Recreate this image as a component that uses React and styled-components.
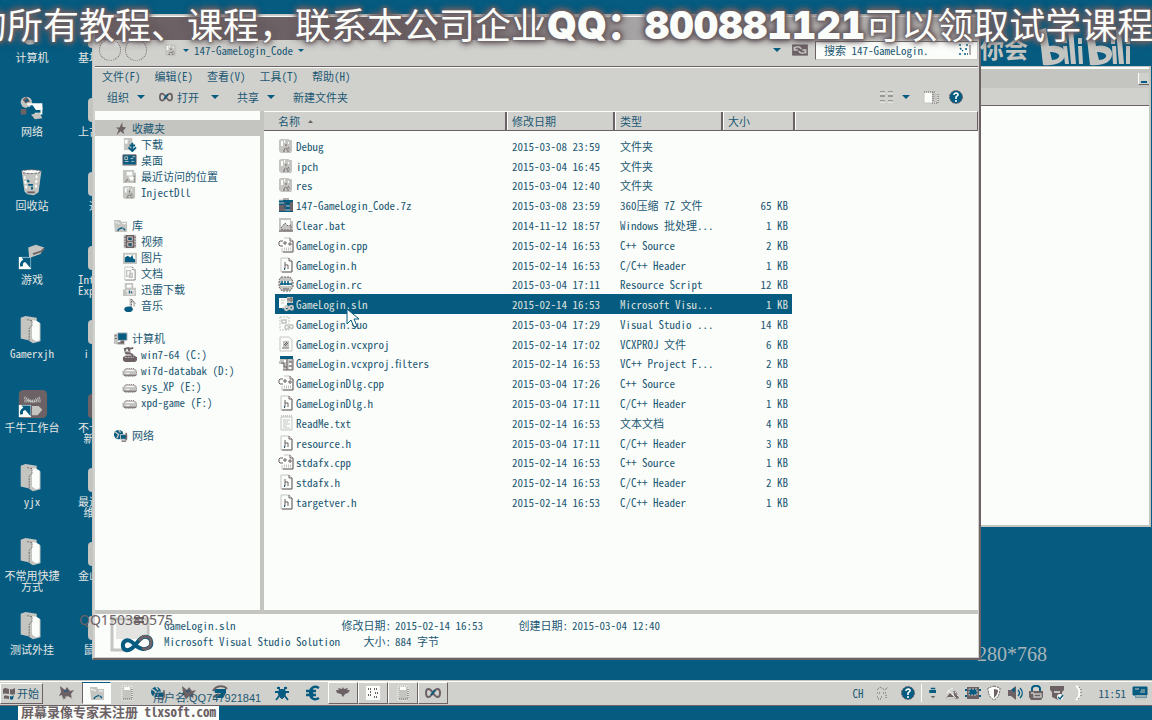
import React from "react";
import styled, { createGlobalStyle, css } from "styled-components";

const c = {
  blue: "#065b80",
  face: "#d0d1cd",
  gray: "#c4c5c1",
  white: "#fbfdfa",
  brown: "#6c6165",
  ink: "#1c5873",
};

const Global = createGlobalStyle`
  *, *::before, *::after { box-sizing: border-box; }
  html, body { margin: 0; }
  body {
    background: ${c.blue};
    color: ${c.ink};
    font-family: "Noto Sans CJK SC", "Liberation Sans", sans-serif;
    font-feature-settings: "hwid";
    font-size: 11px;
    line-height: 16px;
    overflow: hidden;
  }
  button, input {
    font: inherit;
    font-feature-settings: inherit;
    color: inherit;
    background: none;
    border: 0;
    padding: 0;
    margin: 0;
  }
  ul { list-style: none; margin: 0; padding: 0; }
  svg { display: block; flex: none; }
`;

/* ---------- icons ---------- */

const Svg = ({ s = 16, w, h, box = "0 0 16 16", children }) => (
  <svg width={w || s} height={h || s} viewBox={box} fill="none" aria-hidden="true">{children}</svg>
);

const art = {
  folder: <><path d="M1 2l2-1h8v1h3v11l-1 2H3l-2-2z" fill={c.gray} /><path d="M3 3h2v5H3zM6 2h1v3H6zM10 4h1v2h-1z" fill={c.white} /><path d="M5 13h2M6 12l2-3M8 6v3M10 9l2 3M9 13h3M8 11h2" stroke={c.brown} strokeDasharray="2 1" /></>,
  archive: <><path d="M1 3h14v12H1z" fill={c.blue} /><path d="M1 3h4M1 6h5M2 10h4M1 13h13M8 9h6" stroke={c.gray} /><path d="M1 8h5v6H1zM12 5h3v9h-3z" fill={c.brown} /><path d="M5 2h6M7 5v9" stroke={c.brown} /></>,
  bat: <><path d="M1 1h12v3h2v11H1z" fill={c.gray} /><path d="M3 3h9v9H3z" fill={c.white} /><path d="M3 11l4-5 3 3 3-1v5H4z" fill={c.gray} stroke={c.brown} strokeDasharray="2 1" /><path d="M1 14h14" stroke={c.brown} /></>,
  cpp: <><path d="M6 1h6l3 3v11H4v-4" fill={c.white} stroke={c.gray} /><path d="M15 4v11H5M12 1v3h3" stroke={c.brown} /><path d="M5 4H2L1 5v3l1 1h3M7 4v4M5 6h4M12 5v4M10 7h4" stroke={c.brown} /><path d="M6 12h7" stroke={c.gray} strokeDasharray="1 1" strokeWidth="3" /></>,
  header: <><path d="M3 1h8l3 3v11H3z" fill={c.white} stroke={c.gray} /><path d="M14 4v11H4M11 1v3h3" stroke={c.brown} /><path d="M7 5v7M7 8h3v4" stroke={c.brown} /><path d="M6 12h1" stroke={c.ink} strokeWidth="2" /></>,
  rc: <><path d="M3 1h9l3 4v6l-3 4H4L1 11V4z" fill={c.gray} stroke={c.brown} strokeDasharray="2 1" /><path d="M3 5h10v5H3z" fill={c.white} /><path d="M2 8h12M4 5v4M7 5v4M10 5v4" stroke={c.blue} strokeWidth="1.6" /><path d="M5 13h6" stroke={c.brown} /></>,
  sln: <><path d="M1 2h8v10H1z" fill={c.white} /><path d="M9 1h6v6H9z" fill={c.gray} /><path d="M10 2v3M12 2h2v3h-2z" stroke={c.brown} /><path d="M7 12c1-4 3-1 4 0s4 3 4 0-3-3-4 0-4 3-4 0" stroke={c.gray} strokeWidth="2" /><path d="M3 4h4M3 7h3M4 12h4" stroke={c.gray} /></>,
  suo: <><path d="M2 1h9v13H2z" fill={c.white} stroke={c.gray} strokeDasharray="2 1" /><path d="M7 11c1-4 3-1 4 0s4 3 4 0-3-3-4 0-4 3-4 0M4 4h4v3H4z" stroke={c.gray} strokeWidth="1.6" /></>,
  proj: <><path d="M2 1h9l3 3v11H2z" fill={c.white} stroke={c.gray} /><path d="M5 5h6v6H5z" fill={c.gray} /><path d="M6 9l3-3M7 10l3-3M4 12h7" stroke={c.brown} /></>,
  filters: <><path d="M2 1h13v3H2z" fill={c.blue} /><path d="M2 4h13v11H5V9H1V6h1z" fill={c.gray} /><path d="M9 4v11M3 8h3v4h3M11 7h3M11 11h3M5 15h10V4" stroke={c.brown} /><path d="M6 6h2M11 9h2M11 13h2" stroke={c.white} strokeWidth="2" /></>,
  txt: <><path d="M3 2h11v13H3z" fill={c.white} stroke={c.gray} /><path d="M3 1h11" stroke={c.gray} strokeWidth="2" strokeDasharray="1 1" /><path d="M5 5h7M5 7h5M5 9h7M5 11h4M5 13h7" stroke={c.gray} /></>,
  star: <><path d="M8 1l2 5h5l-4 3 1 6-4-3-5 3 2-6-4-3h5z" fill={c.gray} /><path d="M10 1v5l4 1-3 3 1 4-4-3-4 4 2-6-3-2h4z" fill={c.brown} /></>,
  download: <><path d="M2 1h9v13H2z" fill={c.gray} /><path d="M3 3h3v4H3z" fill={c.white} /><path d="M11 6v8M7 11l4 4 4-4M8 9h6" stroke={c.blue} strokeWidth="2" /></>,
  desktop: <><path d="M1 2h14v11H1z" fill={c.blue} stroke={c.brown} /><path d="M3 4h3v3H3zM11 4h3M9 6h3M3 9h4M10 9h3" stroke={c.gray} /><path d="M1 13h14" stroke={c.gray} /></>,
  recent: <><path d="M1 1h12v3h2v11H1z" fill={c.gray} /><path d="M5 3h6v4H5zM7 8h6v4H9z" fill={c.white} /><path d="M4 14l1-3 3 2M13 7v7" stroke={c.brown} strokeDasharray="2 1" /></>,
  library: <><path d="M1 2h7l1 2h6v11H2z" fill={c.gray} /><path d="M2 4l5 2M10 6h4" stroke={c.white} /><path d="M5 14c1-4 4-2 5-4M11 11l2 2" stroke={c.blue} strokeWidth="1.4" /></>,
  video: <><path d="M2 1h13v14H2z" fill={c.brown} /><path d="M3 1v14M14 1v14" stroke={c.gray} strokeDasharray="2 1" strokeWidth="2" /><path d="M6 3h5v4H6zM6 9h5v4H6z" stroke={c.gray} /><path d="M7 5l3 1M9 10v3" stroke={c.blue} strokeWidth="2" /></>,
  picture: <><path d="M1 3h15v12H1z" fill={c.gray} /><path d="M3 5h11v7H3z" fill={c.white} /><path d="M3 8l3-2 3 2 2-3 1 4 2 1v3H3z" fill={c.blue} /></>,
  doc: <><path d="M3 1h8l3 3v11H3z" fill={c.white} stroke={c.gray} /><path d="M11 1v3h3v11H4" stroke={c.brown} strokeDasharray="1 1" /><path d="M5 5h4v6H5zM8 8h3v4H8z" stroke={c.gray} strokeWidth="1.4" /></>,
  thunder: <><path d="M3 1h9v5h3v9H1V8h2z" fill={c.gray} /><path d="M5 3h5v3H5z" fill={c.white} /><path d="M5 9h8v4H6z" stroke={c.white} strokeDasharray="2 1" /><path d="M8 9v3M10 10v2" stroke={c.blue} /></>,
  music: <><path d="M9 11V2l4 3v4" stroke={c.gray} strokeWidth="2" /><path d="M10 11V1l4 5" stroke={c.brown} strokeDasharray="2 1" /><ellipse cx="7" cy="12" rx="4.500" ry="3" fill={c.blue} /></>,
  computer: <><path d="M1 3h4v11H1z" fill={c.gray} /><path d="M5 2h10v8H5z" fill={c.blue} stroke={c.gray} /><path d="M2 5h2M2 8h2" stroke={c.brown} /><path d="M8 10h4v4H5v-2h3z" fill={c.brown} /><path d="M5 14h8" stroke={c.gray} /></>,
  sysdrive: <><path d="M1 11l3-2h9l3 2v3l-2 2H3l-2-2z" fill={c.brown} /><path d="M3 11h10" stroke={c.gray} strokeDasharray="2 1" /><path d="M3 2l4-1 1 4-4 1zM8 2l4-1M4 7h5l3 2" stroke={c.brown} strokeWidth="2" /><path d="M3 5h6" stroke={c.gray} /></>,
  drive: <><path d="M1 9l3-3h9l3 3v3l-2 2H3l-2-2z" fill={c.gray} stroke={c.brown} strokeDasharray="1 1" /><path d="M4 8h9M4 11h4" stroke={c.white} /><path d="M2 13h13" stroke={c.brown} /></>,
  network: <><circle cx="6" cy="7" r="5" fill={c.blue} /><path d="M2 4l4 3-2 4M6 2l2 3" stroke={c.gray} strokeWidth="1.5" /><path d="M8 7h7v5H8z" fill={c.blue} stroke={c.gray} /><path d="M9 14h5M14 5v8" stroke={c.brown} strokeWidth="1.4" /></>,
  infinity: <><path d="M8 8C6 5 5 4 3.500 4S1 6 1 8s1 4 2.500 4S6 11 8 8s3-4 4.500-4S15 6 15 8s-1 4-2.500 4S10 11 8 8" stroke={c.brown} strokeWidth="2" /><path d="M6 10l4-5" stroke={c.blue} strokeWidth="2" /></>,
  views: <><path d="M2 3h5M10 3h5M2 7h5M10 7h5M2 12h5M10 12h5" stroke={c.brown} /><path d="M2 4h5M10 4h5M2 13h5M10 13h5" stroke={c.white} /></>,
  preview: <><path d="M1 3h14v11H1z" fill={c.white} stroke={c.gray} /><path d="M9 4h5v9H9z" fill={c.gray} /><path d="M15 5v9H8M10 3v10M1 3h12" stroke={c.brown} strokeDasharray="1 1" /></>,
  help: <><circle cx="8" cy="8" r="6.500" fill={c.blue} stroke={c.brown} strokeDasharray="2 1" /><path d="M6 6c0-3 5-2 4 0L8 8v2M8 11v2" stroke={c.white} strokeWidth="1.600" /></>,
  refresh: <><path d="M1 3h14v10H1z" fill={c.brown} /><path d="M3 7c1-3 5-2 6 0M3 5v3h3M13 9c-1 3-5 2-6 0M13 11V8h-3" stroke={c.gray} strokeWidth="1.400" /></>,
  bug: <><circle cx="8" cy="8" r="4" fill={c.blue} /><path d="M4 2l2 3M12 2l-2 3M1 7h14M2 15l4-5 4 0 4 5M6 12h4M3 3h3M10 3h3M8 4v10" stroke={c.blue} strokeWidth="1.800" /></>,
  euro: <path d="M14 3C9 0 5 3 5 8s4 8 9 5M1 6h10M1 10h10M7 3v10" stroke={c.blue} strokeWidth="2.400" />,
  bird: <><path d="M1 1l5 4 2-3 3 4 4-1-3 4 1 5-4-3-5 4-1-5-3 1 2-4z" fill={c.brown} /><path d="M3 12l2 3M7 11v4M12 12l2 3" stroke={c.gray} /><path d="M5 6h4" stroke={c.blue} /></>,
  page: <><path d="M3 1h10v14H3z" fill={c.gray} stroke={c.white} strokeDasharray="1 1" /><path d="M5 2h6v3H5z" fill={c.white} /><path d="M4 14h9V4" stroke={c.brown} strokeDasharray="1 1" /></>,
  ring: <><path d="M2 4h12v4l-3 5H3l6-5H3z" fill={c.blue} /><path d="M1 6C4 0 12 0 15 4M1 12l6-3" stroke={c.brown} strokeWidth="2" /></>,
  spider: <path d="M1 5l3 0-1-2 4 1 1-2 1 2 4-1-1 2h3l-2 3-3 1-2 3-2-3-4-1z" fill={c.brown} />,
  grid: <><path d="M1 1h14v14H1z" fill={c.white} /><path d="M3 4h3M9 4h4M3 10h3M9 12h4M5 7h2M10 8h3" stroke={c.brown} strokeWidth="2" strokeDasharray="1 1" /></>,
  flag: <><path d="M2 4c3-2 4 0 6 0v5C6 9 4 8 2 9zM9 4c2 1 3 0 5-1v6c-2 1-3 1-5 0zM3 11c2-1 3 0 5 0v3c-2 0-3-1-5 0z" fill={c.brown} /><path d="M9 11c2 1 3 0 4-1l-1 4c-1 1-2 1-3 0z" fill={c.blue} /></>,
  tiny: <><path d="M5 2h6M3 5h8v2H3" stroke={c.blue} strokeWidth="2" /><path d="M5 12l3 3 3-3z" fill={c.brown} /></>,
  signal: <path d="M3 5l3-3 5 3 3-3M3 8h3M9 8h4M3 12h2M7 12h2M12 10v4M4 14h3" stroke={c.brown} strokeDasharray="1 1" />,
  satellite: <><path d="M2 13l4-5 4 4H2zM9 4l4 4 2 6h-4z" fill={c.brown} /><path d="M3 8l5-5 6 8M4 5l8 8" stroke={c.white} strokeDasharray="2 1" /><path d="M1 14h14" stroke={c.gray} /></>,
  chip: <><path d="M2 2h12v12H2z" fill={c.brown} /><path d="M4 4h8v6H4z" fill={c.blue} stroke={c.gray} strokeDasharray="2 1" /><path d="M0 5h16M0 11h16" stroke={c.blue} strokeDasharray="2 12" strokeWidth="2" /></>,
  shield: <><path d="M8 1l6 2c0 6-2 10-6 12C4 13 2 9 2 3z" fill={c.white} stroke={c.brown} strokeDasharray="2 1" /><path d="M8 4l4 1c0 3-1 5-4 8z" fill={c.brown} /></>,
  sound: <><path d="M1 5h3l5-4v14l-5-4H1z" fill={c.brown} /><path d="M4 5l4-3v5z" fill={c.blue} /><path d="M11 5c2 2 2 4 0 6M13 3c3 3 3 7 0 10" stroke={c.blue} strokeWidth="1.400" /></>,
  lock: <><path d="M4 6V3c1-3 7-3 8 0v3" stroke={c.blue} strokeWidth="2" /><path d="M1 6h14v6l-2 3H3l-2-3z" fill={c.brown} /><path d="M6 9h7v3H6zM3 8h3" stroke={c.gray} strokeWidth="1.400" /></>,
  mask: <><path d="M1 1h14v4l-2 2v6l-4 2-6-3V7L1 5z" fill={c.brown} /><path d="M5 7h6" stroke={c.gray} strokeWidth="2" /><circle cx="11" cy="12" r="3" fill={c.white} /><path d="M9 12l2 2 3-4" stroke={c.blue} strokeWidth="1.400" /></>,
  moon: <><path d="M6 1c4 2 5 10 0 14" stroke={c.white} strokeWidth="2" /><path d="M11 4v8M9 2l2 2M8 14l2-2" stroke={c.brown} strokeDasharray="1 2" /></>,
  screen: <><path d="M1 2h14v8H1zM3 12h12" fill={c.blue} stroke={c.blue} /><path d="M3 4h4M9 5h4M8 7h5M4 11h10M3 14h11" stroke={c.gray} /></>,
  search: <><path d="M3 3h3M10 3h2M4 6l3 3M9 7h3M3 12h2M8 12h4" stroke={c.blue} strokeWidth="1.400" strokeDasharray="2 1" /><path d="M14 3v10" stroke={c.brown} /></>,
};
const Icon = ({ name, s = 16 }) => <Svg s={s}>{art[name]}</Svg>;

const big = {
  pc: <path d="M8 22c2 7 12 7 14 0z" fill={c.gray} />,
  net: <><circle cx="11" cy="10" r="6" fill={c.gray} /><path d="M7 7l4-3 4 5-5 2zM5 17h6v6H5z" fill={c.brown} /><path d="M12 12h6l3 4h6v6h-7" stroke={c.white} strokeWidth="2" /><path d="M18 11h10v7h-7z" fill={c.white} /><path d="M16 23l9-2 3 6-8 1z" fill={c.gray} /><path d="M10 9l3-2M12 15l6 7" stroke={c.blue} strokeWidth="2" /></>,
  bin: <><path d="M6 4h21l-3 23-5 3-7-1-3-3z" fill={c.gray} /><ellipse cx="16" cy="5" rx="10" ry="2" fill={c.white} stroke={c.brown} strokeDasharray="3 1" /><path d="M9 10l2 13M22 9l-1 14" stroke={c.white} strokeWidth="2" strokeDasharray="3 2" /><path d="M12 14l2 2M13 19h5M17 21v3" stroke={c.blue} strokeWidth="2" /><path d="M12 27h8" stroke={c.brown} strokeWidth="2" /></>,
  game: <><path d="M13 7l8-3 9 3-4 7-12 4z" fill={c.gray} /><path d="M18 14l9-3 3-3" stroke={c.brown} strokeWidth="2" /></>,
  folder: <><path d="M5 3l5-2 12 2v4l4 2v19l-8 2-5-3-8-2z" fill={c.gray} /><path d="M17 6h4l4 2v19l-4 1-4-3z" fill={c.white} /><path d="M14 27V14l3-3M12 5l5 1v5" stroke={c.brown} strokeDasharray="2 1" /></>,
  app: <><rect x="3" y="1" width="30" height="30" rx="5" fill={c.brown} /><path d="M9 9l8 5 9-5M9 13h18" stroke={c.gray} strokeDasharray="1 1" strokeWidth="3" /><path d="M17 18h7l4 4-5 6h-6z" fill={c.gray} /></>,
};
const shortcut = <><path d="M3 17h13v13H3z" fill={c.white} /><path d="M6 27c-1-4 1-6 5-6M9 19h5v6z" stroke={c.blue} strokeWidth="3" /></>;

/* ---------- desktop ---------- */

const Screen = styled.div`
  position: relative;
  display: flex;
  flex-direction: column;
  height: 100vh;
  overflow: hidden;
`;
const DesktopArea = styled.main`
  position: relative;
  flex: 1;
  min-height: 0;
  display: flex;
`;
const IconColumn = styled.ul`
  padding-top: 18px;
  width: 64px;
  text-align: ${(p) => (p.$peek ? "left" : "center")};
`;
const Shortcut = styled.li`
  height: 74px;
  display: flex;
  flex-direction: column;
  align-items: ${(p) => (p.$peek ? "flex-start" : "center")};
  gap: 2px;
  padding-left: ${(p) => (p.$peek ? "14px" : "0")};
  color: #e3e6e3;
  line-height: 11px;
  white-space: pre;
`;
const PeekArt = styled.span`
  width: 16px;
  height: 24px;
  margin: 6px 0 2px 10px;
  border-radius: 4px 0 0 4px;
  background: ${(p) => (p.$dark ? c.brown : c.gray)};
`;

const windowEdge = css`
  position: absolute;
  display: flex;
  flex-direction: column;
  background: ${c.face};
  border: 1px solid ${c.gray};
  border-right: 2px solid ${c.brown};
  border-bottom: 2px solid ${c.brown};
`;
const BackWindow = styled.section`
  ${windowEdge}
  left: 500px;
  right: 1px;
  top: 66px;
  bottom: 153px;
  border-color: ${c.gray};
`;
const BackTitle = styled.div`
  height: 21px;
  background: ${c.gray};
  border-top: 2px solid ${c.white};
  display: flex;
  justify-content: flex-end;
  align-items: center;
`;
const MinButton = styled.button`
  width: 11px;
  height: 12px;
  background: ${c.face};
  border-left: 1px solid ${c.white};
  border-bottom: 1px solid ${c.brown};
  &::after {
    content: "";
    display: block;
    width: 6px;
    height: 2px;
    margin: 7px 0 0 2px;
    background: ${c.blue};
  }
`;
const BackBar = styled.div`
  height: 18px;
  border-bottom: 1px solid ${c.brown};
`;
const BackBody = styled.div`
  flex: 1;
  background: ${c.white};
`;

const Explorer = styled.section`
  ${windowEdge}
  left: 92px;
  right: 171px;
  top: 14px;
  bottom: 20px;
  padding: 1px 1px 1px 2px;
`;
const TitleBar = styled.div`
  height: 24px;
  background: linear-gradient(90deg, ${c.brown} 35%, #a5a2a3 60%, ${c.gray} 85%);
  border-top: 1px solid ${c.white};
`;
const AddressBar = styled.div`
  height: 27px;
  display: flex;
  align-items: center;
  border-bottom: 1px solid ${c.brown};
  padding: 0 0 6px 4px;
`;
const RoundButton = styled.button`
  width: 22px;
  height: 22px;
  margin-right: 4px;
  border: 1px dotted ${c.brown};
  border-radius: 50%;
  background: linear-gradient(${c.white}, ${c.face} 40%);
`;
const Path = styled.div`
  flex: 1;
  display: flex;
  align-items: center;
  gap: 5px;
  margin-left: 13px;
  line-height: 14px;
`;
const Caret = styled.span`
  width: 0;
  height: 0;
  border: solid transparent;
  border-width: ${(p) => (p.$small ? "3px 3px 0" : "4px 4px 0")};
  border-top-color: ${c.blue};
`;
const PathTools = styled.div`
  display: flex;
  align-items: center;
  gap: 10px;
  margin-right: 6px;
`;
const SearchBox = styled.label`
  width: 163px;
  height: 19px;
  display: flex;
  align-items: center;
  padding: 0 5px 0 8px;
  background: ${c.white};
  border: 1px solid ${c.gray};
  border-top-color: ${c.brown};
  border-left-color: ${c.brown};
  input { flex: 1; min-width: 0; }
`;
const MenuBar = styled.nav`
  height: 19px;
  display: flex;
  align-items: center;
  gap: 14px;
  padding: 0 0 3px 7px;
  border-top: 1px solid ${c.white};
`;
const Toolbar = styled.div`
  height: 25px;
  display: flex;
  align-items: center;
  padding: 0 14px 3px 12px;
`;
const Tool = styled.button`
  display: flex;
  align-items: center;
  gap: ${(p) => p.$gap || 4}px;
  margin-right: ${(p) => p.$after || 0}px;
`;
const Spacer = styled.span`
  flex: 1;
`;
const Panes = styled.div`
  flex: 1;
  min-height: 0;
  display: flex;
  background: ${c.white};
`;
const Tree = styled.nav`
  width: 165px;
  display: flex;
  flex-direction: column;
  gap: 17px;
  padding-top: 9px;
`;
const TreeRow = styled.li`
  height: 16px;
  display: flex;
  align-items: center;
  gap: 4px;
  padding-left: ${(p) => (p.$root ? 18 : 27)}px;
  background: ${(p) => (p.$active ? c.gray : "transparent")};
  white-space: nowrap;
`;
const Splitter = styled.div`
  width: 4px;
  background: ${c.gray};
`;
const Files = styled.div`
  flex: 1;
  min-width: 0;
`;
const HeaderRow = styled.div`
  height: 20px;
  display: flex;
  background: ${c.face};
  border-top: 1px solid ${c.white};
  border-bottom: 1px solid ${c.brown};
  border-right: 1px solid ${c.brown};
`;
const HeaderCell = styled.button`
  width: ${(p) => p.$w}px;
  display: flex;
  align-items: center;
  gap: 8px;
  padding-left: ${(p) => p.$pad || 5}px;
  border-right: 2px solid ${c.brown};
  box-shadow: 1px 0 0 ${c.white};
`;
const FileTable = styled.table`
  height: 376px;
  margin: 5px 0 0 11px;
  width: 517px;
  table-layout: fixed;
  border-collapse: collapse;
  line-height: 14px;
`;
const FileRow = styled.tr`
  background: ${(p) => (p.$on ? c.blue : "transparent")};
  color: ${(p) => (p.$on ? "#dfe1de" : "inherit")};
`;
const Cell = styled.td`
  padding: 0 4px 0 ${(p) => (p.$first ? 3 : 6)}px;
  text-align: ${(p) => (p.$num ? "right" : "left")};
  white-space: nowrap;
`;
const NameBox = styled.span`
  display: flex;
  align-items: center;
  gap: 2px;
`;
const Details = styled.footer`
  height: 47px;
  display: flex;
  background: ${c.white};
  border-top: 4px solid ${c.gray};
  line-height: 16px;
  padding: 3px 0 0 15px;
`;
const DetailCol = styled.div`
  width: ${(p) => p.$w}px;
  white-space: nowrap;
`;
const Pair = styled.div`
  display: flex;
  gap: 4px;
  span { width: 50px; text-align: right; }
`;
const DetailArt = styled.div`
  width: 54px;
`;

const TaskBar = styled.footer`
  height: 26px;
  display: flex;
  align-items: center;
  background: ${c.face};
  border-top: 1px solid ${c.gray};
  border-bottom: 1px solid ${c.brown};
  box-shadow: inset 0 1px 0 ${c.white};
`;
const StartButton = styled.button`
  width: 43px;
  height: 21px;
  display: flex;
  align-items: center;
  margin-right: 8px;
  border: 1px solid ${c.white};
  border-right-color: ${c.brown};
  border-bottom-color: ${c.brown};
`;
const TaskIcon = styled.button`
  width: ${(p) => p.$w || 31}px;
  height: 22px;
  display: grid;
  place-items: center;
  border: 1px solid transparent;
  ${(p) => p.$pressed && css`background: ${c.white}; border-top-color: ${c.blue}; border-left-color: ${c.brown};`}
  ${(p) => p.$raised && css`border-color: ${c.white} ${c.brown} ${c.brown} ${c.white};`}
`;
const Tray = styled.div`
  margin-left: auto;
  display: flex;
  align-items: center;
  gap: 5px;
  padding-right: 4px;
  height: 22px;
`;
const TrayTools = styled.div`
  display: flex;
  align-items: center;
  gap: 10px;
`;
const TrayRule = styled.span`
  width: 1px;
  height: 18px;
  background: ${c.white};
`;
const Clock = styled.time`
  padding: 0 1px 0 8px;
`;
const BottomStrip = styled.div`
  height: 14px;
  padding-left: 18px;
`;
const RecorderNote = styled.div`
  width: max-content;
  height: 14px;
  padding: 0 3px;
  background: ${c.white};
  color: ${c.brown};
  font-size: 13px;
  font-weight: 700;
  line-height: 12px;
`;

/* ---------- overlays ---------- */

const Banner = styled.div`
  position: absolute;
  left: -29px;
  top: 0;
  white-space: nowrap;
  font-size: 36px;
  font-feature-settings: normal;
  text-spacing-trim: space-all;
  line-height: 46px;
  color: ${c.white};
  text-shadow: 0 0 2px ${c.brown}, 0 0 2px ${c.brown}, 0 0 4px ${c.brown}, 0 0 5px ${c.brown}, 0 0 6px ${c.brown}, 0 0 8px ${c.brown}, 0 0 8px ${c.brown};
  b {
    font-family: Inter, "Noto Sans CJK SC", sans-serif;
    font-size: 38px;
    font-weight: 900;
    font-feature-settings: "tnum";
  }
`;
const Brand = styled.div`
  position: absolute;
  right: 20px;
  top: 27px;
  display: flex;
  align-items: center;
  gap: 10px;
  color: ${c.gray};
  font-size: 24px;
  font-weight: 700;
  line-height: 42px;
`;
const Mark = styled.div`
  position: absolute;
  left: ${(p) => p.$x}px;
  bottom: ${(p) => p.$b}px;
  white-space: nowrap;
  color: ${(p) => p.$color || c.brown};
  font-family: ${(p) => p.$font || "inherit"};
  font-size: ${(p) => p.$size}px;
  line-height: 16px;
`;
const Pointer = styled.div`
  position: absolute;
  left: 346px;
  top: 308px;
`;

const desktopIcons = [
  ["pc", "计算机"], ["net", "网络"], ["bin", "回收站"], ["game", "游戏", 1], ["folder", "Gamerxjh"],
  ["app", "千牛工作台", 1], ["folder", "yjx"], ["folder", "不常用快捷\n方式"], ["folder", "测试外挂"],
];
const peekIcons = ["基址", "上古", "  迅", "Int\nExp", " i", "不卡\n 新", "最近\n 维", "金山", " 鼠"];
const tree = [
  [["star", "收藏夹"], ["download", "下载"], ["desktop", "桌面"], ["recent", "最近访问的位置"], ["folder", "InjectDll"]],
  [["library", "库"], ["video", "视频"], ["picture", "图片"], ["doc", "文档"], ["thunder", "迅雷下载"], ["music", "音乐"]],
  [["computer", "计算机"], ["sysdrive", "win7-64 (C:)"], ["drive", "wi7d-databak (D:)"], ["drive", "sys_XP (E:)"], ["drive", "xpd-game (F:)"]],
  [["network", "网络"]],
];
const files = [
  ["folder", "Debug", "2015-03-08 23:59", "文件夹", ""],
  ["folder", "ipch", "2015-03-04 16:45", "文件夹", ""],
  ["folder", "res", "2015-03-04 12:40", "文件夹", ""],
  ["archive", "147-GameLogin_Code.7z", "2015-03-08 23:59", "360压缩 7Z 文件", "65 KB"],
  ["bat", "Clear.bat", "2014-11-12 18:57", "Windows 批处理...", "1 KB"],
  ["cpp", "GameLogin.cpp", "2015-02-14 16:53", "C++ Source", "2 KB"],
  ["header", "GameLogin.h", "2015-02-14 16:53", "C/C++ Header", "1 KB"],
  ["rc", "GameLogin.rc", "2015-03-04 17:11", "Resource Script", "12 KB"],
  ["sln", "GameLogin.sln", "2015-02-14 16:53", "Microsoft Visu...", "1 KB"],
  ["suo", "GameLogin.suo", "2015-03-04 17:29", "Visual Studio ...", "14 KB"],
  ["proj", "GameLogin.vcxproj", "2015-02-14 17:02", "VCXPROJ 文件", "6 KB"],
  ["filters", "GameLogin.vcxproj.filters", "2015-02-14 16:53", "VC++ Project F...", "2 KB"],
  ["cpp", "GameLoginDlg.cpp", "2015-03-04 17:26", "C++ Source", "9 KB"],
  ["header", "GameLoginDlg.h", "2015-03-04 17:11", "C/C++ Header", "1 KB"],
  ["txt", "ReadMe.txt", "2015-02-14 16:53", "文本文档", "4 KB"],
  ["header", "resource.h", "2015-03-04 17:11", "C/C++ Header", "3 KB"],
  ["cpp", "stdafx.cpp", "2015-02-14 16:53", "C++ Source", "1 KB"],
  ["header", "stdafx.h", "2015-02-14 16:53", "C/C++ Header", "2 KB"],
  ["header", "targetver.h", "2015-02-14 16:53", "C/C++ Header", "1 KB"],
];

export default function App() {
  return (
    <Screen>
      <Global />
      <DesktopArea>
        <IconColumn>
          {desktopIcons.map(([icon, label, link]) => (
            <Shortcut key={label}>
              <Svg s={32} box="0 0 34 32">{big[icon]}{link && shortcut}</Svg>
              {label}
            </Shortcut>
          ))}
        </IconColumn>
        <IconColumn $peek>
          {peekIcons.map((label, i) => (
            <Shortcut key={label} $peek>
              <PeekArt $dark={i === 5} />
              {label}
            </Shortcut>
          ))}
        </IconColumn>

        <BackWindow>
          <BackTitle><MinButton aria-label="最小化" /></BackTitle>
          <BackBar />
          <BackBody />
        </BackWindow>

        <Mark $x={977} $b={18} $size={20} $color="#a9b4b8" $font='"Liberation Serif", serif'>280*768</Mark>

        <Explorer>
          <TitleBar />
          <AddressBar>
            <RoundButton aria-label="后退" />
            <RoundButton aria-label="前进" />
            <Path>
              <Icon name="folder" s={14} />
              <Caret $small />
              147-GameLogin_Code
              <Caret $small />
            </Path>
            <PathTools>
              <Caret />
              <Icon name="refresh" s={18} />
            </PathTools>
            <SearchBox>
              <input aria-label="搜索" defaultValue="搜索 147-GameLogin." />
              <Icon name="search" />
            </SearchBox>
          </AddressBar>
          <MenuBar>
            {["文件(F)", "编辑(E)", "查看(V)", "工具(T)", "帮助(H)"].map((m) => <button key={m}>{m}</button>)}
          </MenuBar>
          <Toolbar>
            <Tool $gap={8} $after={14}>组织<Caret /></Tool>
            <Tool $after={12}><Icon name="infinity" s={14} />打开</Tool>
            <Tool $after={18} aria-label="打开方式"><Caret /></Tool>
            <Tool $gap={8} $after={18}>共享<Caret /></Tool>
            <Tool>新建文件夹</Tool>
            <Spacer />
            <Tool $gap={8} $after={13} aria-label="更改视图"><Icon name="views" /><Caret /></Tool>
            <Tool $after={9} aria-label="预览窗格"><Icon name="preview" /></Tool>
            <Tool aria-label="帮助"><Icon name="help" /></Tool>
          </Toolbar>
          <Panes>
            <Tree>
              {tree.map((group, g) => (
                <ul key={g}>
                  {group.map(([icon, label], i) => (
                    <TreeRow key={label} $root={i === 0} $active={g === 0 && i === 0}>
                      <Icon name={icon} s={15} />{label}
                    </TreeRow>
                  ))}
                </ul>
              ))}
            </Tree>
            <Splitter />
            <Files>
              <HeaderRow>
                <HeaderCell $w={243} $pad={14}>名称 <Svg w={5} h={3} box="0 0 5 3"><path d="M0 3l2.500-3L5 3z" fill={c.brown} /></Svg></HeaderCell>
                <HeaderCell $w={108}>修改日期</HeaderCell>
                <HeaderCell $w={108}>类型</HeaderCell>
                <HeaderCell $w={72}>大小</HeaderCell>
              </HeaderRow>
              <FileTable>
                <colgroup><col width="231" /><col width="108" /><col width="108" /><col width="70" /></colgroup>
                <tbody>
                  {files.map(([icon, name, date, type, size]) => (
                    <FileRow key={name} $on={name === "GameLogin.sln"}>
                      <Cell $first><NameBox><Icon name={icon} />{name}</NameBox></Cell>
                      <Cell>{date}</Cell>
                      <Cell>{type}</Cell>
                      <Cell $num>{size}</Cell>
                    </FileRow>
                  ))}
                </tbody>
              </FileTable>
            </Files>
          </Panes>
          <Details>
            <DetailArt>
              <Svg w={44} h={38} box="0 0 44 38">
                <path d="M2 0v33h18M2 2h36v16" stroke={c.gray} strokeWidth="3" />
                <path d="M6 4h30v18H6z" fill="#e4e5e2" />
                <path d="M24 1h10M24 5h10" stroke={c.brown} strokeWidth="2" />
                <path d="M26 29c-5-6-8-7-11-5s-3 8 1 9 7-2 10-6 6-8 11-7 6 9 1 11-7 1-12-2" stroke={c.blue} strokeWidth="4" />
                <path d="M29 24c3-6 12-6 12 1s-6 8-9 6" stroke={c.brown} strokeWidth="3" />
              </Svg>
            </DetailArt>
            <DetailCol $w={177}>GameLogin.sln<br />Microsoft Visual Studio Solution</DetailCol>
            <DetailCol $w={177}>
              <Pair><span>修改日期:</span>2015-02-14 16:53</Pair>
              <Pair><span>大小:</span>884 字节</Pair>
            </DetailCol>
            <DetailCol $w={160}>
              <Pair><span>创建日期:</span>2015-03-04 12:40</Pair>
            </DetailCol>
          </Details>
        </Explorer>
      </DesktopArea>

      <TaskBar>
        <StartButton><Icon name="flag" />开始</StartButton>
        <TaskIcon aria-label="迅雷"><Icon name="bird" /></TaskIcon>
        <TaskIcon $w={29} $pressed aria-label="资源管理器"><Icon name="library" /></TaskIcon>
        <TaskIcon aria-label="记事本"><Icon name="page" /></TaskIcon>
        <TaskIcon aria-label="工具"><Icon name="network" /></TaskIcon>
        <TaskIcon aria-label="QQ"><Icon name="bird" /></TaskIcon>
        <TaskIcon aria-label="浏览器"><Icon name="ring" /></TaskIcon>
        <TaskIcon aria-label="画图" />
        <TaskIcon aria-label="调试器"><Icon name="bug" /></TaskIcon>
        <TaskIcon aria-label="编辑器"><Icon name="euro" /></TaskIcon>
        <TaskIcon $w={30} $raised aria-label="注入器"><Icon name="spider" /></TaskIcon>
        <TaskIcon $w={30} $raised aria-label="数据"><Icon name="grid" /></TaskIcon>
        <TaskIcon $w={30} $raised aria-label="文本"><Icon name="page" /></TaskIcon>
        <TaskIcon $w={30} $raised aria-label="Visual Studio"><Icon name="infinity" /></TaskIcon>
        <Tray>
          <TrayTools>
            <span>CH</span>
            <Icon name="signal" />
            <Icon name="help" />
          </TrayTools>
          <TrayRule />
          <Icon name="tiny" s={12} />
          {["satellite", "chip", "shield", "sound", "lock", "mask", "moon"].map((n) => <Icon key={n} name={n} />)}
          <Clock>11:51</Clock>
          <Icon name="screen" />
        </Tray>
      </TaskBar>
      <BottomStrip>
        <RecorderNote>屏幕录像专家未注册 tlxsoft.com</RecorderNote>
      </BottomStrip>

      <Brand>
        你会
        <Svg w={94} h={40} box="0 0 94 40">
          <g fill={c.gray}>
            <path fillRule="evenodd" d="M1 2l7-2 3 18c9-2 17 2 16 9-1 8-10 11-22 10zM12 24l2 8c5 0 8-3 7-5s-5-3-9-3z" />
            <path fillRule="evenodd" d="M48 2l7-2 3 18c9-2 17 2 16 9-1 8-10 11-22 10zM59 24l2 8c5 0 8-3 7-5s-5-3-9-3z" />
            <path d="M25 18h4l2 18h-4zM30 2l5-1 3 35h-5zM40 18h4l1 18h-4zM74 18h4l1 18h-4zM78 2l5-1 3 35h-5zM88 18h4l0 18h-4z" />
            <path d="M24 10l4-1 1 6h-4zM40 10h4v6h-4zM73 10h4v6h-4zM88 10h4v6h-4z" />
          </g>
        </Svg>
      </Brand>
      <Banner>的所有教程、课程，联系本公司企业<b>QQ：800881121</b>可以领取试学课程</Banner>
      <Mark $x={79} $b={92} $size={14} $font='"Noto Sans", sans-serif'>QQ150380575</Mark>
      <Mark $x={153} $b={14} $size={11} $color={c.ink} $font='"Liberation Sans", "Noto Sans CJK SC", sans-serif'>用户名:QQ747921841</Mark>
      <Pointer>
        <Svg w={13} h={20} box="0 0 13 20">
          <path d="M1 1v15l4-4 3 7 3-1-3-7h5z" fill={c.white} stroke={c.blue} />
        </Svg>
      </Pointer>
    </Screen>
  );
}
